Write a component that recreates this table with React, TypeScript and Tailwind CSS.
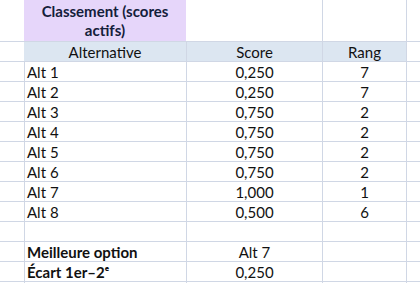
const rows = [
  { alt: 'Alt 1', score: '0,250', rang: '7' },
  { alt: 'Alt 2', score: '0,250', rang: '7' },
  { alt: 'Alt 3', score: '0,750', rang: '2' },
  { alt: 'Alt 4', score: '0,750', rang: '2' },
  { alt: 'Alt 5', score: '0,750', rang: '2' },
  { alt: 'Alt 6', score: '0,750', rang: '2' },
  { alt: 'Alt 7', score: '1,000', rang: '1' },
  { alt: 'Alt 8', score: '0,500', rang: '6' },
]

const line = 'border-[#D0D7E5]'

function Row({ a = '', b = '', c = '', bold = false }: { a?: string; b?: string; c?: string; bold?: boolean }) {
  return (
    <div className={`flex h-[20px] border-b ${line}`}>
      <div className={`w-[25px] shrink-0 border-r ${line}`} />
      <div className={`w-[162px] shrink-0 border-r ${line} pl-[2px] flex items-center ${bold ? 'font-bold' : ''}`}>{a}</div>
      <div className={`w-[136px] shrink-0 border-r ${line} flex items-center justify-center`}>{b}</div>
      <div className={`w-[84px] shrink-0 border-r ${line} flex items-center justify-center`}>{c}</div>
      <div className="flex-1" />
    </div>
  )
}

export default function App() {
  return (
    <div className="w-[420px] h-[283px] overflow-hidden bg-white text-[15px] leading-[18px] text-[#111111]" style={{ fontFamily: 'Lato, "Open Sans", sans-serif' }}>
      {/* titre */}
      <div className={`flex h-[42px] border-b ${line}`}>
        <div className="w-[24px] shrink-0" />
        <div className="w-[162px] shrink-0 bg-[#E6D6FA] flex items-center justify-center text-center font-bold text-[#14203a] leading-[19px] px-2">
          Classement (scores actifs)
        </div>
        <div className={`w-[137px] shrink-0 border-r ${line}`} />
        <div className={`w-[84px] shrink-0 border-r ${line}`} />
        <div className="flex-1" />
      </div>

      {/* en-tête */}
      <div className={`flex h-[20px] border-b ${line}`}>
        <div className="w-[24px] shrink-0" />
        <div className={`w-[163px] shrink-0 bg-[#DCE6F1] border-r ${line} flex items-center justify-center`}>Alternative</div>
        <div className={`w-[136px] shrink-0 bg-[#DCE6F1] border-r ${line} flex items-center justify-center`}>Score</div>
        <div className={`w-[84px] shrink-0 bg-[#DCE6F1] border-r ${line} flex items-center justify-center`}>Rang</div>
        <div className="flex-1" />
      </div>

      {rows.map(r => (
        <Row key={r.alt} a={r.alt} b={r.score} c={r.rang} />
      ))}
      <Row />
      <Row a="Meilleure option" b="Alt 7" bold />
      <Row a="Écart 1er–2ᵉ" b="0,250" bold />
      <Row />
    </div>
  )
}
